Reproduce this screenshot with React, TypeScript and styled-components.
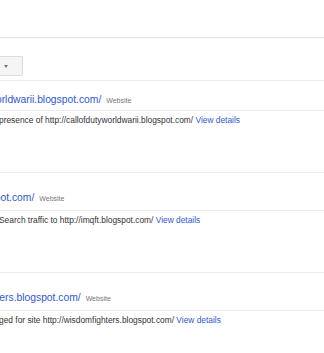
import React from 'react';
import styled, { createGlobalStyle } from 'styled-components';

const GlobalStyle = createGlobalStyle`
  html, body {
    margin: 0;
    padding: 0;
    background: #fff;
  }
  body {
    font-family: "Liberation Sans", Arial, sans-serif;
    overflow: hidden;
  }
`;

const Page = styled.div`
  width: 324px;
  height: 353px;
  overflow: hidden;
  background: #fff;
`;

const Header = styled.div`
  height: 37px;
  border-bottom: 1px solid #e6e6e6;
  box-shadow: 0 1px 0 #f4f4f4;
`;

const Toolbar = styled.div`
  display: flex;
  align-items: center;
  padding: 18px 0 4px;
  border-bottom: 1px solid #ebebeb;
`;

const DropButton = styled.button`
  display: flex;
  align-items: center;
  gap: 6px;
  height: 20px;
  margin-left: -30px;
  padding: 0 14px 0 8px;
  background: #f5f5f5;
  border: 1px solid #dcdcdc;
  border-radius: 2px;
  font-family: inherit;
  font-size: 8.3px;
  color: #444;
`;

const Caret = styled.span`
  width: 0;
  height: 0;
  border-left: 2.5px solid transparent;
  border-right: 2.5px solid transparent;
  border-top: 3px solid #777;
`;

const Item = styled.div<{ $first?: boolean }>`
  border-top: ${(p) => (p.$first ? 'none' : '1px solid #ebebeb')};
`;

const TitleBlock = styled.div<{ $first?: boolean }>`
  display: flex;
  align-items: baseline;
  gap: 5px;
  margin-left: -55px;
  padding: ${(p) => (p.$first ? '12px 0 3px' : '18px 0 5px')};
  border-bottom: 1px solid #ebebeb;
  white-space: nowrap;
`;

const SiteLink = styled.a`
  font-size: 10.3px;
  line-height: 14px;
  color: #3058d0;
  text-decoration: none;
`;

const Kind = styled.span`
  font-size: 7px;
  color: #777;
`;

const DescBlock = styled.div`
  padding: 3px 0 46px;
  margin-left: -1px;
  font-size: 8.4px;
  line-height: 12px;
  color: #333;
  white-space: nowrap;
`;

const Details = styled.a`
  color: #3058d0;
  text-decoration: none;
`;

const messages = [
  {
    site: 'callofdutyworldwarii.blogspot.com/',
    text: 'presence of http://callofdutyworldwarii.blogspot.com/',
  },
  {
    site: 'imqft.blogspot.com/',
    text: 'Search traffic to http://imqft.blogspot.com/',
  },
  {
    site: 'wisdomfighters.blogspot.com/',
    text: 'ged for site http://wisdomfighters.blogspot.com/',
  },
];

export default function App() {
  return (
    <Page>
      <GlobalStyle />
      <Header />
      <Toolbar>
        <DropButton>
          More
          <Caret />
        </DropButton>
      </Toolbar>
      {messages.map((m, i) => (
        <Item key={m.site} $first={i === 0}>
          <TitleBlock $first={i === 0}>
            <SiteLink href="#">{m.site}</SiteLink>
            <Kind>Website</Kind>
          </TitleBlock>
          <DescBlock>
            {m.text} <Details href="#">View details</Details>
          </DescBlock>
        </Item>
      ))}
    </Page>
  );
}
